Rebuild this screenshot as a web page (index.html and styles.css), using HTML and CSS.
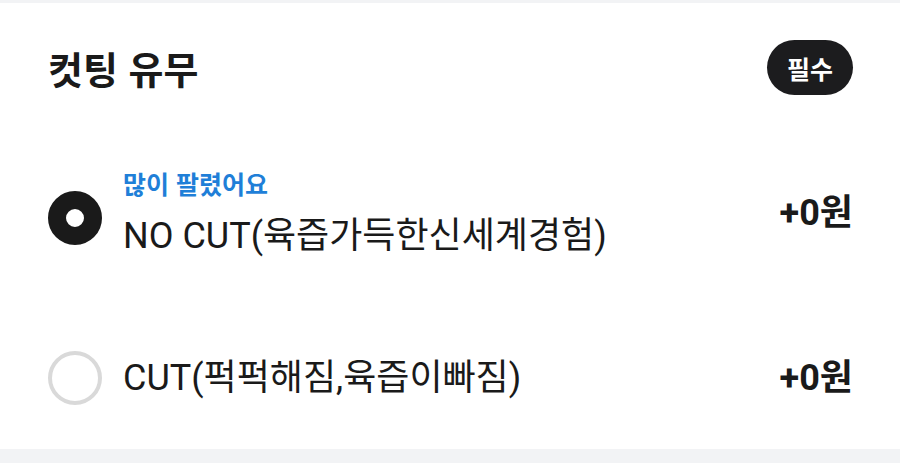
FILE: index.html
```html
<!DOCTYPE html>
<html lang="ko">
<head>
<meta charset="utf-8">
<link rel="stylesheet" href="styles.css">
</head>
<body>
<div class="gap-top"></div>
<section class="section">
  <header class="header">
    <h2 class="title">컷팅 유무</h2>
    <span class="badge">필수</span>
  </header>
  <ul class="options">
    <li class="option">
      <span class="radio radio-on"></span>
      <div class="text">
        <span class="tag">많이 팔렸어요</span>
        <span class="name">NO CUT(육즙가득한신세계경험)</span>
      </div>
      <span class="price">+0원</span>
    </li>
    <li class="option option-2">
      <span class="radio"></span>
      <div class="text">
        <span class="name">CUT(퍽퍽해짐,육즙이빠짐)</span>
      </div>
      <span class="price">+0원</span>
    </li>
  </ul>
</section>
<div class="gap-bottom"></div>
</body>
</html>
```

FILE: styles.css
```css
* { box-sizing: border-box; }
html, body { margin: 0; padding: 0; background: #fff; }
body {
  font-family: Roboto, "Noto Sans CJK KR", sans-serif;
  color: #1a1a1a;
  width: 900px;
}
.gap-top { height: 3px; background: #f2f3f5; }
.gap-bottom { height: 14px; background: #f2f3f5; }
.section { padding: 37px 47px 44px 48px; }
.header {
  display: flex;
  align-items: center;
  justify-content: space-between;
  height: 55px;
}
.title {
  margin: 0;
  font-family: "Noto Sans CJK KR", sans-serif;
  font-size: 38px;
  font-weight: 700;
  line-height: 55px;
}
.badge {
  width: 86px;
  height: 55px;
  border-radius: 28px;
  background: #1c1c1e;
  color: #fff;
  font-family: "Noto Sans CJK KR", sans-serif;
  font-weight: 700;
  font-size: 25px;
  display: flex;
  align-items: center;
  justify-content: center;
}
.options { list-style: none; margin: 0; padding: 73px 0 0; }
.option { display: flex; align-items: center; }
.option-2 { margin-top: 93px; }
.radio {
  width: 54px;
  height: 54px;
  border-radius: 50%;
  border: 4px solid #d9d9d9;
  flex: none;
  margin-right: 21px;
}
.radio-on { border: 18px solid #1a1a1a; margin-top: 10px; }
.text { flex: 1; display: flex; flex-direction: column; }
.tag {
  font-family: "Noto Sans CJK KR", sans-serif;
  font-weight: 700;
  font-size: 25px;
  line-height: 30px;
  color: #1f7fd8;
  margin-bottom: 16px;
}
.name {
  font-size: 36px;
  line-height: 44px;
  font-weight: 400;
}
.price {
  font-size: 36px;
  font-weight: 700;
  line-height: 44px;
}
```
